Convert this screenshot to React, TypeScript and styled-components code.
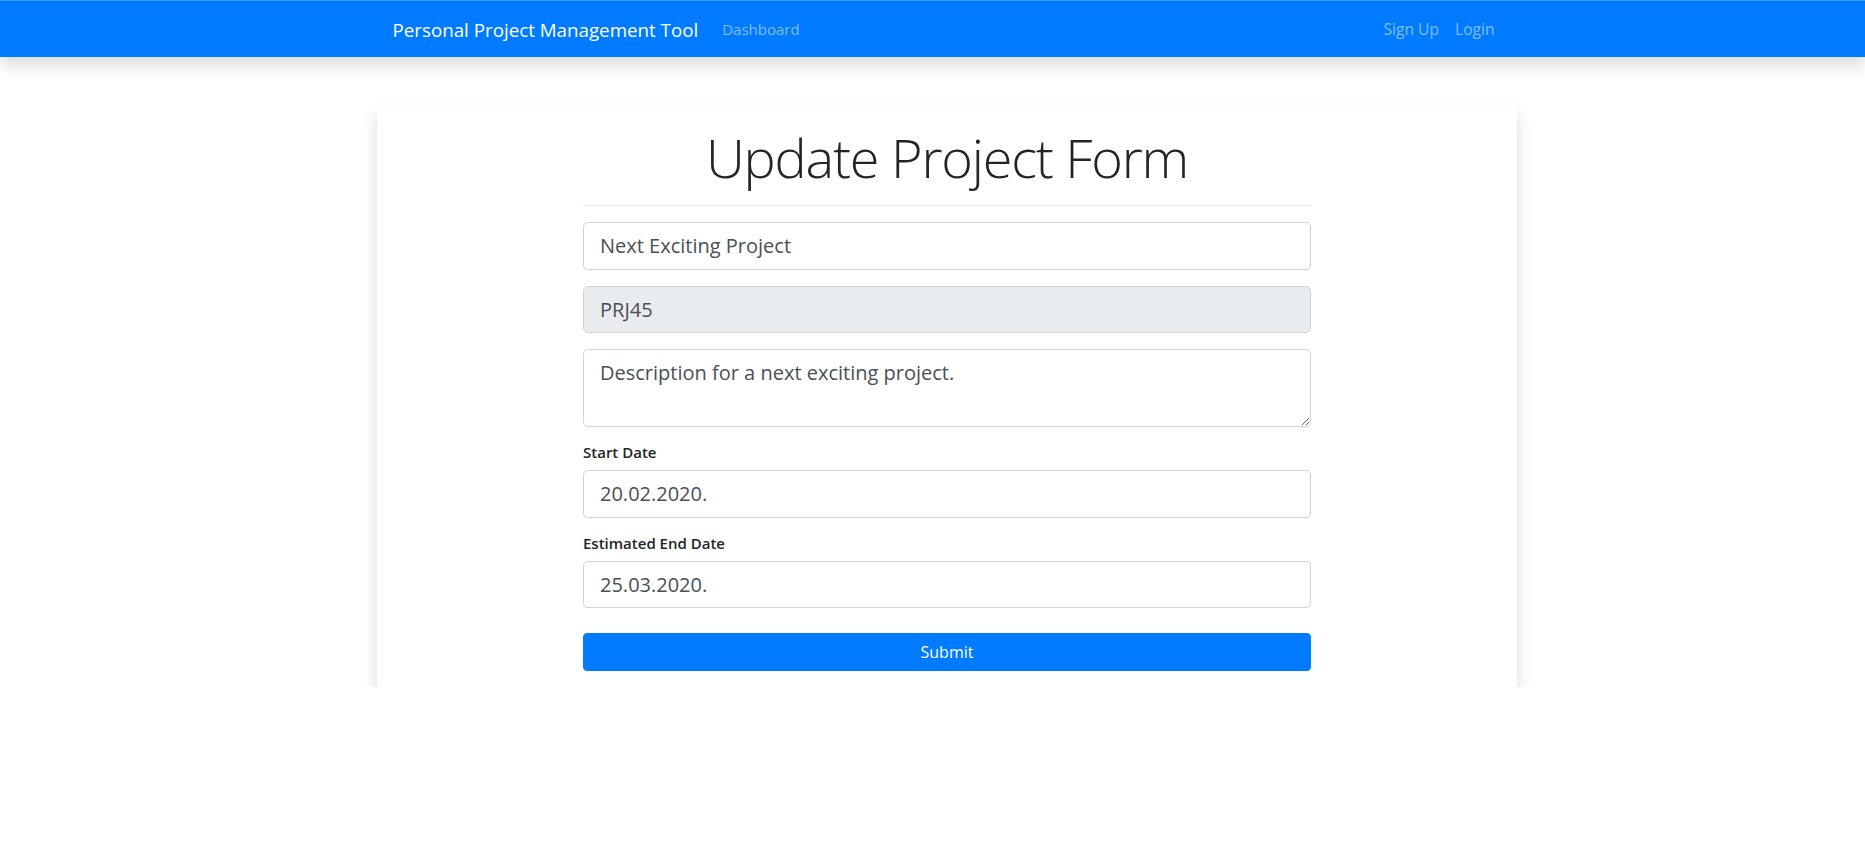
import React from 'react';
import styled, {createGlobalStyle} from 'styled-components';

const GlobalStyle = createGlobalStyle`
  body {
    margin: 0;
    background: #fff;
    font-family: "Open Sans", "Noto Sans", sans-serif;
    color: #212529;
  }
`;

const NavBar = styled.nav`
  height: 56px;
  background: #007bff;
  border-top: 1px solid #3d9bff;
  box-shadow: 0 8px 16px rgba(0, 0, 0, 0.15);
`;
const NavInner = styled.div`
  max-width: 1140px;
  height: 100%;
  margin: 0 auto;
  padding-left: 30px;
  box-sizing: border-box;
  display: flex;
  align-items: center;
`;
const Brand = styled.a`
  color: #fff;
  font-size: 18.75px;
  margin-right: 16px;
  white-space: nowrap;
`;
const NavLinks = styled.div<{ $right?: boolean }>`
  display: flex;
  margin-left: ${p => (p.$right ? 'auto' : '0')};
  font-size: ${p => (p.$right ? '15.6px' : '15px')};
`;
const NavLink = styled.a`
  color: rgba(255, 255, 255, 0.5);
  padding: 8px;
`;

const Main = styled.main`
  display: flex;
  justify-content: center;
  padding: 48px 0 0 29px;
`;
const Card = styled.section`
  width: 1140px;
  background: #fff;
  border-radius: 4px;
  box-shadow: 0 8px 16px rgba(0, 0, 0, 0.15);
  padding: 19px 0 16px;
  display: flex;
  justify-content: center;
`;
const Column = styled.form`
  width: 728px;
  display: flex;
  flex-direction: column;
`;
const Title = styled.h1`
  margin: 0;
  height: 66px;
  font-size: 54px;
  font-weight: 300;
  letter-spacing: -1.2px;
  line-height: 66px;
  text-align: center;
  color: #212529;
`;
const Rule = styled.hr`
  width: 100%;
  margin: 15px 0 16px;
  border: 0;
  border-top: 1px solid rgba(0, 0, 0, 0.1);
`;
const Group = styled.div`
  margin-bottom: 16px;
  display: flex;
  flex-direction: column;
`;
const Label = styled.label`
  font-size: 15px;
  font-weight: 600;
  line-height: 19.2px;
  margin-bottom: 8px;
  color: #212529;
`;
const Input = styled.input`
  height: 47.5px;
  padding: 8px 16px;
  font: inherit;
  font-size: 20px;
  line-height: 1.5;
  color: #495057;
  background: #fff;
  border: 1px solid #ced4da;
  border-radius: 4.8px;
  box-sizing: border-box;
  outline: none;

  &:disabled {
    background: #e9ecef;
    opacity: 1;
  }
`;
const TextArea = styled.textarea`
  height: 78px;
  padding: 8px 16px;
  font: inherit;
  font-size: 20px;
  line-height: 1.5;
  color: #495057;
  border: 1px solid #ced4da;
  border-radius: 4.8px;
  box-sizing: border-box;
  resize: vertical;
  outline: none;
`;
const SubmitButton = styled.button`
  margin-top: 9px;
  height: 38px;
  width: 100%;
  font: inherit;
  font-size: 16px;
  color: #fff;
  background: #007bff;
  border: 1px solid #007bff;
  border-radius: 4px;
  cursor: pointer;
`;

const App: React.FC = () => {
  return (
    <>
      <GlobalStyle/>
      <NavBar>
        <NavInner>
          <Brand>Personal Project Management Tool</Brand>
          <NavLinks>
            <NavLink>Dashboard</NavLink>
          </NavLinks>
          <NavLinks $right>
            <NavLink>Sign Up</NavLink>
            <NavLink>Login</NavLink>
          </NavLinks>
        </NavInner>
      </NavBar>
      <Main>
        <Card>
          <Column onSubmit={e => e.preventDefault()}>
            <Title>Update Project Form</Title>
            <Rule/>
            <Group>
              <Input type="text" defaultValue="Next Exciting Project"/>
            </Group>
            <Group>
              <Input type="text" defaultValue="PRJ45" disabled/>
            </Group>
            <Group>
              <TextArea defaultValue="Description for a next exciting project."/>
            </Group>
            <Group>
              <Label>Start Date</Label>
              <Input type="text" defaultValue="20.02.2020."/>
            </Group>
            <Group>
              <Label>Estimated End Date</Label>
              <Input type="text" defaultValue="25.03.2020."/>
            </Group>
            <SubmitButton type="submit">Submit</SubmitButton>
          </Column>
        </Card>
      </Main>
    </>
  );
};
export default App;
